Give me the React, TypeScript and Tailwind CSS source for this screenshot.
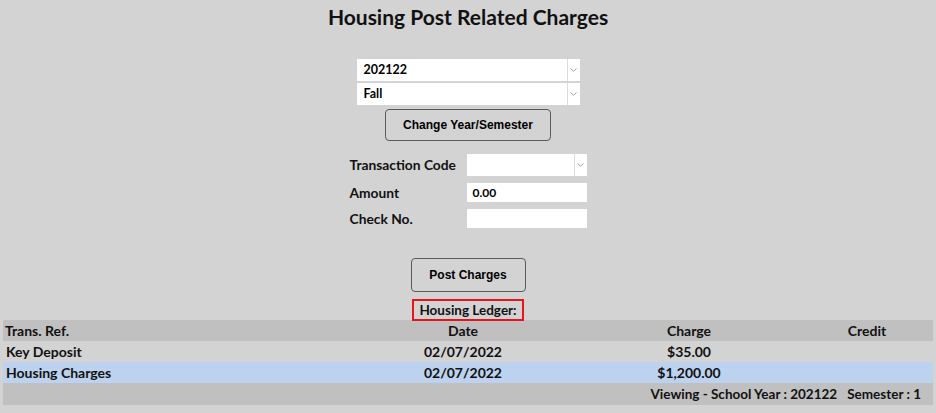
import type { ReactNode } from "react";

const font = { fontFamily: '"Lato", "Open Sans", sans-serif' };

function Chevron() {
  return (
    <svg width="7" height="4" viewBox="0 0 7 4" fill="none" stroke="#a0a0a0" strokeWidth="1">
      <path d="M0.5 0.5 L3.5 3.2 L6.5 0.5" />
    </svg>
  );
}

function FakeSelect({ value, className }: { value: string; className: string }) {
  return (
    <div className={`flex bg-white ${className}`}>
      <div className="flex-1 pl-[7px] flex items-center text-[12.5px] font-bold text-black">{value}</div>
      <div className="w-[13px] border-l border-[#dcdcdc] flex items-center justify-center">
        <Chevron />
      </div>
    </div>
  );
}

function FormRow({ label, children }: { label: string; children: ReactNode }) {
  return (
    <div className="flex items-center">
      <div className="w-[117px] text-[13.8px] leading-[18px] font-bold text-[#111]">{label}</div>
      {children}
    </div>
  );
}

function Btn({ label, className }: { label: string; className: string }) {
  return (
    <button
      className={`rounded-[4px] border border-[#5a5a5a] bg-[#d3d3d3] text-[12px] font-bold text-black ${className}`}
      style={{ fontFamily: '"Liberation Sans", Arial, sans-serif' }}
    >
      {label}
    </button>
  );
}

const rows = [
  { ref: "Key Deposit", date: "02/07/2022", charge: "$35.00", bg: "bg-[#d3d3d3]" },
  { ref: "Housing Charges", date: "02/07/2022", charge: "$1,200.00", bg: "bg-[#bcd2ee]" },
];

export default function App() {
  return (
    <div className="min-h-[413px] w-full bg-[#d3d3d3] text-[#111]" style={font}>
      <div className="flex flex-col items-center">
        <h1 className="mt-[5px] text-[21px] leading-[24px] font-bold text-[#111]">
          Housing Post Related Charges
        </h1>

        <div className="mt-[30px] flex flex-col gap-[2px] w-[223px]">
          <FakeSelect value="202122" className="h-[22px]" />
          <FakeSelect value="Fall" className="h-[22px]" />
        </div>

        <Btn label="Change Year/Semester" className="mt-[4px] w-[166px] h-[32px]" />

        <div className="mt-[13px] flex flex-col gap-[7px] w-[237px]">
          <FormRow label="Transaction Code">
            <FakeSelect value="" className="h-[22px] w-[120px]" />
          </FormRow>
          <FormRow label="Amount">
            <div className="h-[19px] w-[120px] bg-white pl-[6px] flex items-center text-[12px] font-bold text-black">
              0.00
            </div>
          </FormRow>
          <FormRow label="Check No.">
            <div className="h-[19px] w-[120px] bg-white" />
          </FormRow>
        </div>

        <Btn label="Post Charges" className="mt-[30px] w-[115px] h-[34px]" />

        <div className="mt-[7px] w-[112px] h-[22px] border-2 border-[#e8141b] flex items-center justify-center text-[13.5px] font-bold text-[#111]">
          Housing Ledger:
        </div>
      </div>

      <div className="mx-[3px] -mt-[1px] text-[14px] font-bold text-[#111]">
        <div className="grid grid-cols-[346px_228px_224px_1fr] h-[21px] items-center bg-[#c0c0c0]">
          <div className="pl-[2px]">Trans. Ref.</div>
          <div className="text-center">Date</div>
          <div className="text-center">Charge</div>
          <div className="text-center">Credit</div>
        </div>
        {rows.map((r) => (
          <div
            key={r.ref}
            className={`grid grid-cols-[346px_228px_224px_1fr] h-[21px] items-center ${r.bg}`}
          >
            <div className="pl-[3px]">{r.ref}</div>
            <div className="text-center">{r.date}</div>
            <div className="text-center">{r.charge}</div>
            <div />
          </div>
        ))}
        <div className="h-[22px] flex items-center justify-end gap-[10px] pr-[12px] bg-[#c0c0c0] text-[13.5px]">
          <span>Viewing - School Year : 202122</span>
          <span>Semester : 1</span>
        </div>
      </div>
    </div>
  );
}
